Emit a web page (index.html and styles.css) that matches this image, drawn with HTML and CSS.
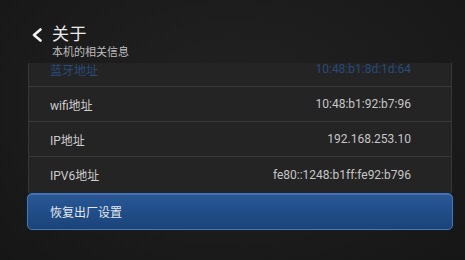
FILE: index.html
```html
<!DOCTYPE html>
<html lang="zh">
<head>
<meta charset="utf-8">
<link rel="stylesheet" href="styles.css">
</head>
<body>
<div class="screen">
  <header class="header">
    <svg class="back" width="12" height="14" viewBox="0 0 12 14"><path d="M9.5 1.5 L3 7 L9.5 12.5" fill="none" stroke="#f2f2f2" stroke-width="2.6" stroke-linecap="round" stroke-linejoin="round"/></svg>
    <div class="titles">
      <div class="title">关于</div>
      <div class="subtitle">本机的相关信息</div>
    </div>
  </header>
  <div class="viewport">
    <div class="panel">
      <div class="row row-faded"><span class="label">蓝牙地址</span><span class="value">10:48:b1:8d:1d:64</span></div>
      <div class="row"><span class="label">wifi地址</span><span class="value">10:48:b1:92:b7:96</span></div>
      <div class="row"><span class="label">IP地址</span><span class="value">192.168.253.10</span></div>
      <div class="row row-last"><span class="label">IPV6地址</span><span class="value">fe80::1248:b1ff:fe92:b796</span></div>
    </div>
    <div class="button"><span class="label">恢复出厂设置</span></div>
  </div>
</div>
</body>
</html>
```

FILE: styles.css
```css
html, body {
  margin: 0;
  padding: 0;
  background: #1a1a1a;
}
.screen {
  width: 465px;
  height: 260px;
  overflow: hidden;
  background: radial-gradient(ellipse at 50% 40%, #222 0%, #1b1b1b 60%, #161616 100%);
  font-family: Roboto, "Noto Sans CJK SC", sans-serif;
  color: #d0d0d0;
  display: flex;
  flex-direction: column;
}
.header {
  height: 63px;
  box-sizing: border-box;
  padding: 26px 0 0 31px;
  display: flex;
  align-items: flex-start;
  gap: 9px;
}
.back {
  margin-top: 2px;
  flex: none;
}
.titles {
  display: flex;
  flex-direction: column;
}
.title {
  font-size: 17px;
  line-height: 17px;
  color: #ececec;
  letter-spacing: 0.5px;
}
.subtitle {
  font-size: 11px;
  line-height: 12px;
  margin-top: 4px;
  color: #bdbdbd;
}
.viewport {
  margin: 0 12px 0 27px;
  display: flex;
  flex-direction: column;
}
.panel {
  height: 130px;
  overflow: hidden;
  margin: 0 1px;
  background: #242424;
  border-left: 1px solid #363636;
  border-right: 1px solid #363636;
  display: flex;
  flex-direction: column;
}
.row {
  flex: none;
  height: 35px;
  box-sizing: border-box;
  border-bottom: 1px solid #3a3a3a;
  padding: 0 40px 0 21px;
  display: flex;
  align-items: center;
  justify-content: space-between;
  font-size: 12px;
}
.row-faded {
  margin-top: -11px;
}
.row-faded .label, .row-faded .value {
  color: #284a7c;
}
.row-last {
  border-bottom: none;
}
.label {
  color: #cccccc;
}
.value {
  color: #c6c6c6;
}
.button {
  height: 37px;
  box-sizing: border-box;
  border-radius: 5px;
  border: 1px solid #4676b8;
  background: linear-gradient(#2b5894 0%, #22508c 40%, #1b4378 100%);
  box-shadow: inset 0 1px 0 rgba(120,160,220,0.35), 0 0 2px #0d2b52;
  padding: 0 0 0 22px;
  display: flex;
  align-items: center;
  font-size: 12px;
}
.button .label {
  color: #e3e8ef;
}
```
